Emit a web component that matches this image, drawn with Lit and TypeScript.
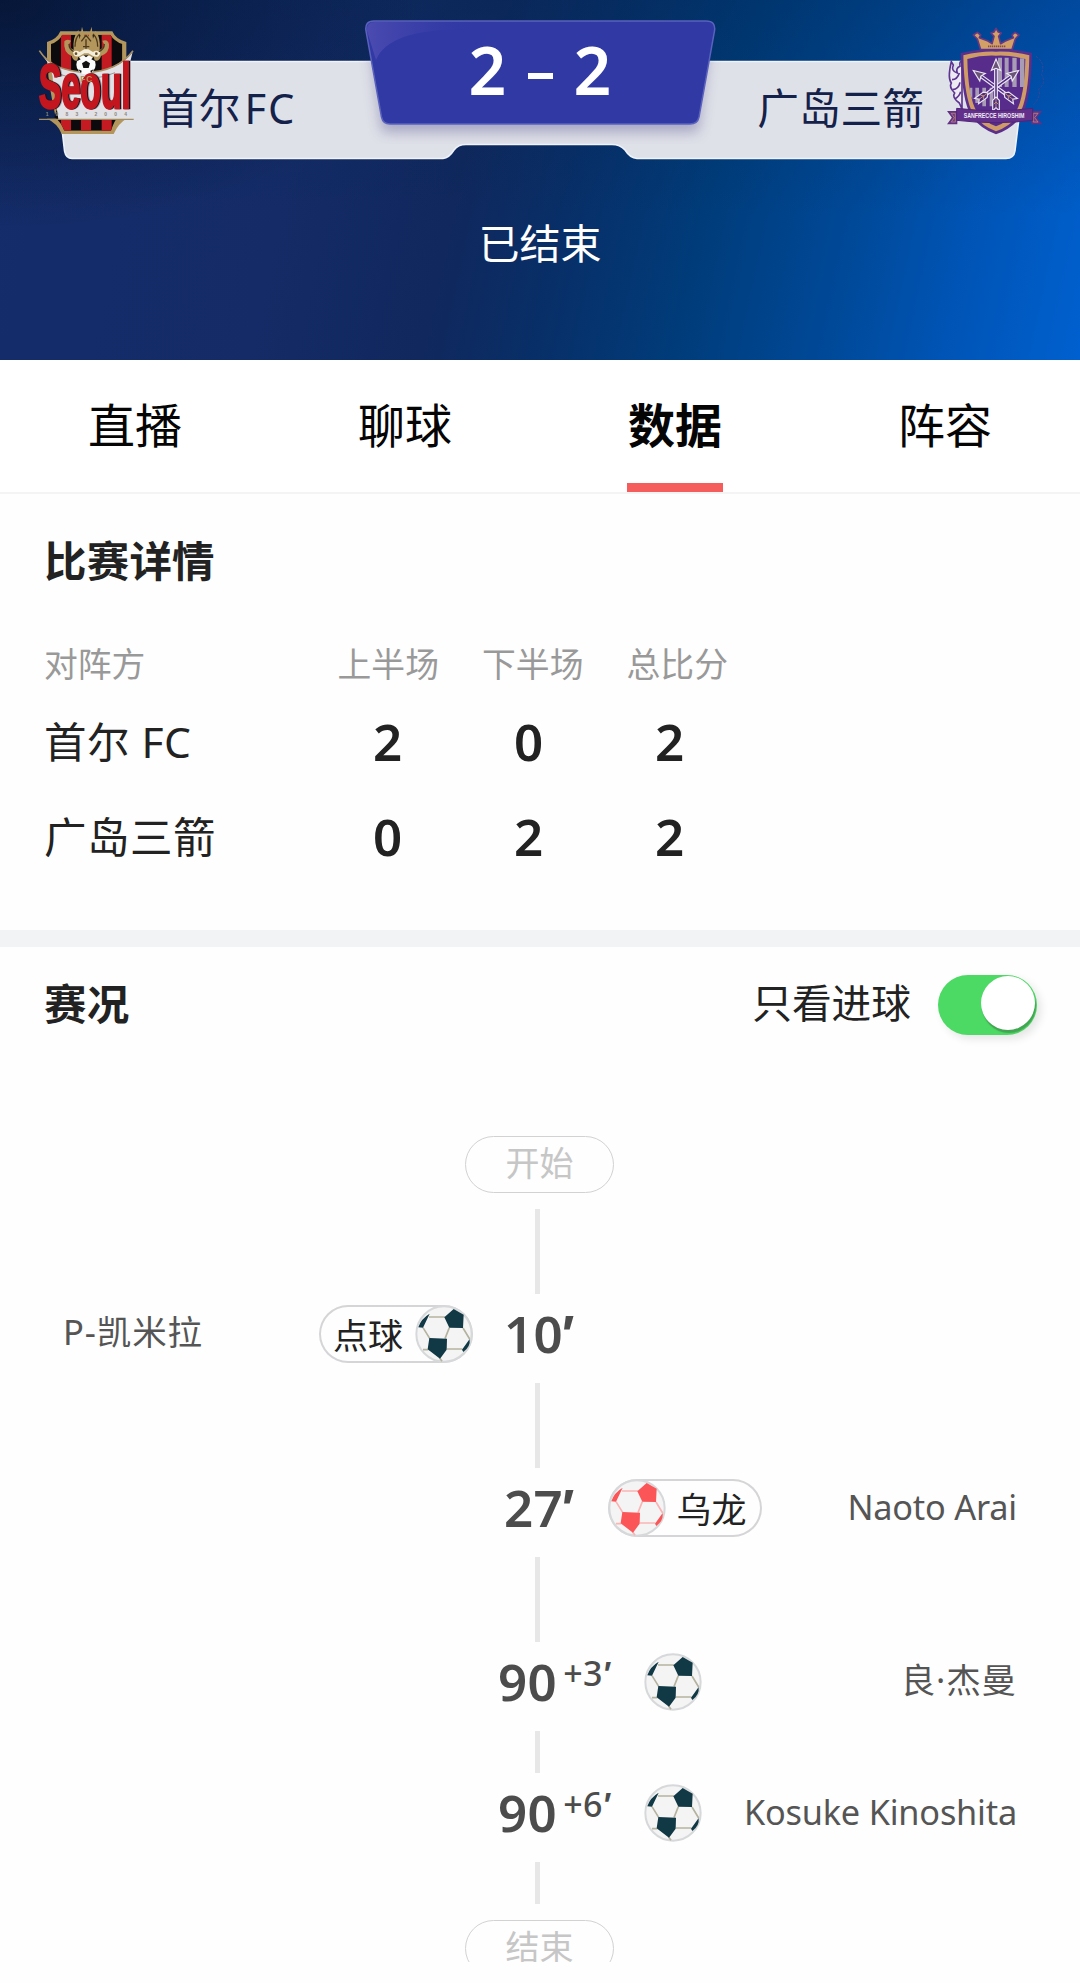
import { html, css, svg, LitElement } from "lit";
import { customElement, property, state } from "lit/decorators.js";
import { classMap } from "lit/directives/class-map.js";
import { map } from "lit/directives/map.js";


interface MatchEvent {
    minute: string;
    extra?: string;
    side: 'home' | 'away';
    player: string;
    latin?: boolean;
    label?: string;
    ownGoal?: boolean;
}

interface ScoreRow {
    team: string;
    scores: number[];
}

@customElement("soccer-ball")
export class SoccerBall extends LitElement {
    static styles = css`
    :host {
        display: block;
        width: 58px;
        height: 58px;
        flex: none;
    }
    svg {
        display: block;
    }
    .shell {
        fill: #f4f4f5;
        stroke: #d6d8da;
        stroke-width: 6;
    }
    .patch {
        fill: #103845;
    }
    .seam {
        fill: none;
        stroke: #b5b39f;
        stroke-width: 5;
    }
    .own .patch {
        fill: #fb5557;
    }
    .own .seam {
        stroke: #fab4b4;
    }
    `;
    @property({ type: Boolean }) own = false;

    render() {
        return html`
        <svg class=${classMap({ own: this.own })} width="58" height="58" viewBox="612 73 174 174">
            <circle class="shell" cx="699" cy="160" r="83"/>
            <path class="seam" d="M654 109H702M636 141L656 173M715 141L702 174M756 142L776 175M708 205H754M686 232L693 242M636 207H652"/>
            <path class="patch" d="M728 85L758 102L756 142L715 141L700 110ZM655 172L708 174L707 207L687 234L650 206ZM656 99L636 141L622 140Q630 114 656 99ZM776 175Q779 198 757 214L753 207Z"/>
        </svg>
        `;
    }
}

@customElement("seoul-crest")
export class SeoulCrest extends LitElement {
    static styles = css`
    :host, svg {
        display: block;
    }
    .name {
        font: bold 187px "Liberation Sans", sans-serif;
        fill: #c3161f;
        stroke: #c3161f;
        stroke-width: 7;
        filter: drop-shadow(7px 0 0 #16121c);
    }
    .fc {
        font: bold 25px "Liberation Sans", sans-serif;
        fill: #b3965b;
    }
    .years {
        font: bold 15px "Liberation Sans", sans-serif;
        fill: #8d887f;
    }
    `;

    render() {
        return html`
        <svg width="98" height="112" viewBox="108 72 294 336">
            <defs>
                <clipPath id="shield"><path d="M184 104H328Q340 124 364 132V175Q350 250 340 330L350 352Q340 362 330 392H190Q180 366 160 352L170 320Q152 230 150 175V132Q174 124 184 104Z"/></clipPath>
            </defs>
            <path fill="#b3965b" d="M178 94H334Q344 118 376 126V190Q370 300 352 356H376Q352 370 338 402H182Q170 370 138 356H165Q145 270 138 190V126Q168 118 178 94Z"/>
            <g clip-path="url(#shield)">
                <path fill="#0c0a0c" d="M140 90H380V410H140Z"/>
                <path fill="#c41a21" d="M180 90H210V410H180ZM240 90H270V410H240ZM302 90H332V410H302Z"/>
            </g>
            <path fill="#e1e1e6" d="M116 156Q160 215 255 217Q350 215 395 156L384 200V358H172L150 200Z"/>
            <path fill="none" stroke="#a58e62" stroke-width="5" d="M115 152Q155 214 255 217Q350 214 396 152"/>
            <path fill="#b3965b" d="M190 124Q196 116 210 122Q196 140 218 150Q214 112 232 90L236 118L243 80L251 110L255 92L262 110L272 80L276 116L284 92Q300 114 296 150Q316 140 304 122Q322 116 324 134Q326 158 300 168Q294 188 278 180H234Q218 188 212 168Q186 158 190 124Z"/>
            <path fill="none" stroke="#4d3a1e" stroke-width="4" d="M222 140Q222 114 236 102M290 140Q290 114 276 102M241 124L255 106L270 124M246 140H265M204 132Q204 148 220 156M310 132Q310 148 292 156M255 118V146"/>
            <path fill="#f3eddc" d="M216 156Q224 148 236 156L250 148H262L276 156Q288 148 298 158Q294 176 276 168L262 160H250L236 168Q218 174 216 156Z"/>
            <circle cx="225" cy="161" r="4" fill="#6a4d20"/>
            <circle cx="286" cy="161" r="4" fill="#6a4d20"/>
            <circle cx="255" cy="194" r="29" fill="#fbfbfb"/>
            <path fill="#111" d="M255 182L267 190L263 204H247L243 190ZM228 184L239 178L232 170ZM282 184L271 178L278 170ZM232 208L242 212L240 220ZM278 208L268 212L270 220ZM248 166H263L255 172Z"/>
            <path fill="none" stroke="#77716c" stroke-width="2" d="M172 221Q200 234 232 234M278 234Q312 232 342 218"/>
            <g transform="translate(113 324) scale(.55 1)">
                <text class="name" x="0" y="0" textLength="503">Seoul</text>
            </g>
            <text class="fc" x="238" y="247" textLength="36">FC</text>
            <text class="years" x="134" y="348" textLength="244">1983*2004</text>
            <path fill="none" stroke="#a58e62" stroke-width="4" d="M114 358H398"/>
        </svg>
        `;
    }
}

@customElement("hiroshima-crest")
export class HiroshimaCrest extends LitElement {
    static styles = css`
    :host, svg {
        display: block;
    }
    .motto {
        font: bold 20px "Liberation Sans", sans-serif;
        fill: #f1eaf5;
    }
    `;

    arrow(angle: number) {
        return svg`
        <g transform="rotate(${angle} 824 262)" stroke="#ece6f2" stroke-width="3.5" fill="#4f2a85">
            <path d="M820 206H828V302H820Z"/>
            <path d="M824 178L838 212L824 206L810 212Z" fill="#6a5478"/>
            <path d="M814 302L824 292L834 302V334L824 324L814 334Z"/>
            <path d="M824 296V326M817 314L824 307L831 314" fill="none" stroke="#c69a6a" stroke-width="2.5"/>
        </g>
        `;
    }

    render() {
        return html`
        <svg width="100" height="112" viewBox="674 76 300 336">
            <path fill="#eeeaf2" stroke="#5d3591" stroke-width="5" d="M690 186Q678 236 690 250Q682 262 700 280Q690 292 714 310L722 328V186Q714 182 716 200Q702 206 708 220Q688 214 696 196Z"/>
            <path fill="none" stroke="#5d3591" stroke-width="5" d="M692 240Q708 240 714 220M694 270Q712 268 716 248M700 298Q714 290 718 276"/>
            <path fill="none" stroke="#34489a" stroke-width="3" stroke-dasharray="8 4" d="M944 170Q974 190 960 224Q976 250 952 268Q960 290 936 316"/>
            <path fill="#d2a066" stroke="#693883" stroke-width="5" stroke-linejoin="round" d="M778 150L768 118L756 106L768 98L778 106L774 114L800 124L812 132L818 110L809 100L818 97L824 86L831 97L840 100L832 110L838 132L852 124L876 114L872 106L881 98L893 106L882 118L872 150Z"/>
            <path fill="none" stroke="#7e4a5c" stroke-width="5" stroke-dasharray="4 2" d="M800 140H852"/>
            <path fill="#5b2f8b" d="M718 160Q780 146 824 148Q870 146 932 160Q930 300 900 350Q870 388 824 404Q778 388 750 350Q720 300 718 160Z"/>
            <path fill="#cf9c68" d="M726 167Q780 154 824 156Q870 154 924 167Q922 296 894 344Q866 380 824 395Q782 380 756 344Q728 296 726 167Z"/>
            <path fill="#572c8b" d="M738 178Q780 166 824 168Q870 166 912 178Q910 290 884 336Q860 366 824 380Q788 366 766 336Q740 290 738 178Z"/>
            <path fill="#a79bb5" d="M830 174H842V262H830ZM850 174H862V262H850ZM873 174H886V262H873ZM896 176H909V262H896ZM745 264H753V300L745 280ZM762 264H773V310H762ZM783 264H794V320H783ZM805 264H816V320H805Z"/>
            ${this.arrow(-54)}
            ${this.arrow(54)}
            ${this.arrow(0)}
            <path fill="#6d3a8d" stroke="#633083" stroke-width="4" d="M681 336H706V372H681L694 354ZM959 336H932V372H959L944 354Z"/>
            <path fill="none" stroke="#c5956c" stroke-width="2" d="M690 341H702V367H690L699 354ZM950 341H936V367H950L940 354Z"/>
            <path fill="#62308b" stroke="#512477" stroke-width="3" d="M706 326Q824 340 934 326V362Q824 376 706 362Z"/>
            <text class="motto" x="727" y="354" textLength="182" lengthAdjust="spacingAndGlyphs">SANFRECCE HIROSHIM</text>
        </svg>
        `;
    }
}

@customElement("app-root")
export class AppRoot extends LitElement {
    static styles = css`
    :host {
        display: block;
        width: 1080px;
        height: 1983px;
        overflow: hidden;
        background: #fefefe;
        color: #222;
        font-family: "Noto Sans", "Noto Sans CJK SC", sans-serif;
    }
    .header {
        position: relative;
        height: 360px;
        background:
            radial-gradient(ellipse 420px 230px at 0 0, rgba(2, 12, 34, .65), rgba(2, 16, 46, 0)),
            linear-gradient(to bottom, rgba(0, 36, 78, .3), rgba(0, 36, 78, 0) 60%),
            linear-gradient(102deg, #142d6b 0%, #142b67 28%, #10285d 43%, #082f68 53%, #003c7a 65%, #004a9b 79%, #0054b5 88%, #0060cf 100%);
    }
    .board {
        position: absolute;
        left: 0;
        top: 0;
    }
    .teams {
        position: relative;
        display: grid;
        grid-template-columns: 120px 209px 348px 210px 156px;
        padding: 21px 0 0 37px;
        height: 140px;
        box-sizing: border-box;
    }
    .crest {
        padding-top: 3px;
    }
    .crest.away {
        padding: 4px 0 0 22px;
    }
    .team {
        padding-top: 57px;
        line-height: 60px;
        font-size: 41.7px;
        color: #14214a;
        white-space: nowrap;
    }
    .team.away {
        text-align: right;
    }
    .latin {
        margin-left: 4px;
        letter-spacing: 2px;
    }
    .score {
        display: flex;
        justify-content: center;
        gap: 21px;
        line-height: 96px;
        font-size: 66px;
        font-weight: 600;
        color: #fff;
    }
    .score .home-score, .score .away-score {
        width: 38px;
    }
    .dash {
        width: 25px;
        height: 6px;
        margin-top: 52px;
        background: #fff;
    }
    .status {
        position: relative;
        padding-top: 73px;
        line-height: 60px;
        font-size: 41px;
        text-align: center;
        color: #fff;
    }
    .tabs {
        display: grid;
        grid-template-columns: repeat(4, 1fr);
        height: 132px;
        border-bottom: 2px solid #f4f4f5;
        background: #fff;
    }
    .tab {
        display: flex;
        flex-direction: column;
        align-items: center;
        justify-content: space-between;
        padding-top: 30px;
        font-size: 47px;
        line-height: 70px;
        color: #050505;
    }
    .tab.active {
        font-weight: 700;
    }
    .tab.active::after {
        content: "";
        width: 96px;
        height: 9px;
        background: #f55c5c;
    }
    .details {
        padding: 37px 44px 45px;
    }
    .title {
        font-size: 42.5px;
        line-height: 60px;
        font-weight: 700;
        letter-spacing: .2px;
    }
    .row {
        display: grid;
        grid-template-columns: 273px 141px 141px 141px;
        height: 95px;
        line-height: 93px;
        font-size: 42.5px;
    }
    .row.head {
        grid-template-columns: 272px 144.5px 144.5px 144.5px;
        margin-top: 48px;
        height: 56px;
        line-height: 50px;
        font-size: 33.8px;
        color: #999;
    }
    .name {
        letter-spacing: .5px;
    }
    .cell {
        text-align: center;
    }
    .goals {
        font-size: 51px;
        font-weight: 600;
    }
    .divider {
        height: 17px;
        background: #f2f3f5;
    }
    .feed-head {
        display: flex;
        align-items: center;
        height: 116px;
        padding: 0 43px 0 44px;
    }
    .feed-head .title {
        padding-bottom: 3px;
    }
    .only-goals {
        margin-left: auto;
        margin-right: 27px;
        padding-bottom: 4px;
        font-size: 39.7px;
        line-height: 60px;
    }
    .switch {
        width: 99px;
        height: 60px;
        padding: 1px 2px;
        box-sizing: border-box;
        border-radius: 30px;
        background: #c9c9cb;
        display: flex;
        cursor: pointer;
    }
    .switch.on {
        justify-content: flex-end;
        background: #4cd964;
        box-shadow: 4px 4px 8px rgba(0, 0, 0, .1);
    }
    .knob {
        width: 54px;
        height: 54px;
        border-radius: 50%;
        background: #fff;
        box-shadow: 1px 3px 1px rgba(60, 130, 70, .6);
    }
    .timeline {
        padding-top: 73px;
    }
    .mark {
        width: 149px;
        height: 57px;
        box-sizing: border-box;
        margin: 0 0 16px 465px;
        border: 1.5px solid #d2d2d2;
        border-radius: 29px;
        text-align: center;
        font-size: 34px;
        line-height: 52px;
        color: #c6c6c6;
    }
    .line {
        width: 5px;
        height: 85px;
        margin-left: 535px;
        background: #e7e7e7;
    }
    .line.short {
        height: 42px;
    }
    .event {
        display: grid;
        grid-template-columns: 473px 135px 1fr;
        height: 89px;
        padding-top: 11px;
        box-sizing: border-box;
    }
    .side {
        display: flex;
        align-items: center;
        justify-content: space-between;
        height: 57px;
    }
    .side.home {
        padding-left: 63px;
    }
    .side.away {
        padding-right: 63px;
    }
    .side.plain {
        padding-left: 36px;
    }
    .player {
        padding-bottom: 3px;
        font-size: 34.5px;
        line-height: 50px;
        letter-spacing: .9px;
        color: #555;
        white-space: nowrap;
    }
    .player.roman {
        padding-bottom: 1px;
        font-size: 34.3px;
        letter-spacing: -.2px;
    }
    .badge {
        display: flex;
        align-items: center;
        width: 154px;
        height: 58px;
        box-sizing: border-box;
        border-radius: 29px;
        box-shadow: inset 0 0 0 2px #d5d5d7;
        font-size: 35px;
        line-height: 50px;
        color: #222;
    }
    .badge .label {
        flex: 1;
        text-align: center;
        padding: 4px 6px 0 8px;
    }
    .badge soccer-ball + .label {
        padding: 4px 8px 0 3px;
    }
    .time {
        display: flex;
        padding-left: 31px;
        line-height: 56px;
        font-size: 51px;
        font-weight: 600;
        letter-spacing: .4px;
        color: #4c4c4c;
        white-space: nowrap;
    }
    .time.added {
        padding-left: 25px;
    }
    .prime {
        margin-left: -4px;
        font-style: italic;
        font-weight: 800;
    }
    .extra {
        margin-left: 6px;
        font-size: 34px;
        line-height: 40px;
        font-weight: 500;
    }
    .extra .prime {
        margin-left: -1px;
        font-weight: 700;
    }
    .cutoff {
        height: 42px;
        margin-top: 16px;
        overflow: hidden;
    }
    `;
    @state() onlyGoals = true;

    tabs = ['直播', '聊球', '数据', '阵容'];
    activeTab = '数据';

    rows: ScoreRow[] = [
        { team: '首尔 FC', scores: [2, 0, 2] },
        { team: '广岛三箭', scores: [0, 2, 2] },
    ];

    events: MatchEvent[] = [
        { minute: '10', side: 'home', player: 'P-凯米拉', label: '点球' },
        { minute: '27', side: 'away', player: 'Naoto Arai', latin: true, label: '乌龙', ownGoal: true },
        { minute: '90', extra: '+3', side: 'away', player: '良·杰曼' },
        { minute: '90', extra: '+6', side: 'away', player: 'Kosuke Kinoshita', latin: true },
    ];

    renderBoard() {
        return html`
        <svg class="board" width="1080" height="180" viewBox="0 0 1080 180">
            <defs>
                <filter id="drop" x="-10%" y="-10%" width="120%" height="140%">
                    <feGaussianBlur stdDeviation="7"/>
                </filter>
                <linearGradient id="gloss" x1="0" x2="1">
                    <stop offset="0" stop-color="#5a55b8" stop-opacity=".65"/>
                    <stop offset="1" stop-color="#3a3aa5" stop-opacity="0"/>
                </linearGradient>
                <clipPath id="plate"><path d="M54 61H1026V144H54Z"/></clipPath>
            </defs>
            <path fill="#dfe1e8" stroke="#eef3fc" stroke-width="1.5" d="M54 61.5H1026L1015 151Q1014 158.5 1006 158.5H637Q630 158 625 150Q620 144.5 612 144.5H466Q458 144.5 454 150Q449 158 443 158.5H72Q66 158.5 64.5 151Z"/>
            <g clip-path="url(#plate)">
                <path fill="#5f5a95" opacity=".45" filter="url(#drop)" d="M370 40H710L698 132H382Z"/>
            </g>
            <path fill="#3039a4" stroke="#5a62bd" stroke-width="1.5" d="M374 21H706Q716 21 714.5 31L699 117Q697.5 124 690 124H390Q383 124 381.5 117L366 31Q364.5 21 374 21Z"/>
            <path fill="url(#gloss)" d="M375 22H480V30Q390 26 376 60L367 31Q366 22 375 22Z"/>
        </svg>
        `;
    }

    renderBadge(event: MatchEvent) {
        const ball = html`<soccer-ball ?own=${event.ownGoal}></soccer-ball>`;
        if (!event.label) {
            return ball;
        }
        const label = html`<span class="label">${event.label}</span>`;
        return html`
        <div class="badge">
            ${event.side === 'home' ? html`${label}${ball}` : html`${ball}${label}`}
        </div>
        `;
    }

    renderEvent(event: MatchEvent, index: number) {
        const player = html`<span class="player ${event.latin ? 'roman' : ''}">${event.player}</span>`;
        const prime = html`<span class="prime">'</span>`;
        return html`
        <div class="line ${index > 2 ? 'short' : ''}"></div>
        <div class="event">
            <div class="side home">
                ${event.side === 'home' ? html`${player}${this.renderBadge(event)}` : ''}
            </div>
            <div class="time ${event.extra ? 'added' : ''}">
                ${event.minute}${event.extra ? html`<span class="extra">${event.extra}${prime}</span>` : prime}
            </div>
            <div class="side away ${event.label ? '' : 'plain'}">
                ${event.side === 'away' ? html`${this.renderBadge(event)}${player}` : ''}
            </div>
        </div>
        `;
    }

    render() {
        return html`
        <div class="header">
            ${this.renderBoard()}
            <div class="teams">
                <seoul-crest class="crest"></seoul-crest>
                <div class="team">首尔<span class="latin">FC</span></div>
                <div class="score">
                    <span class="home-score">2</span>
                    <span class="dash"></span>
                    <span class="away-score">2</span>
                </div>
                <div class="team away">广岛三箭</div>
                <hiroshima-crest class="crest away"></hiroshima-crest>
            </div>
            <div class="status">已结束</div>
        </div>
        <div class="tabs">
            ${map(this.tabs, (t) => html`<div class="tab ${t === this.activeTab ? 'active' : ''}">${t}</div>`)}
        </div>
        <div class="details">
            <div class="title">比赛详情</div>
            <div class="row head">
                <span>对阵方</span>
                <span class="cell">上半场</span>
                <span class="cell">下半场</span>
                <span class="cell">总比分</span>
            </div>
            ${map(this.rows, (r) => html`
                <div class="row">
                    <span class="name">${r.team}</span>
                    ${map(r.scores, (s) => html`<span class="cell goals">${s}</span>`)}
                </div>
            `)}
        </div>
        <div class="divider"></div>
        <div class="feed-head">
            <div class="title">赛况</div>
            <div class="only-goals">只看进球</div>
            <div class="switch ${this.onlyGoals ? 'on' : ''}" @click=${() => this.onlyGoals = !this.onlyGoals}>
                <div class="knob"></div>
            </div>
        </div>
        <div class="timeline">
            <div class="mark">开始</div>
            ${map(this.events, (e, i) => this.renderEvent(e, i))}
            <div class="line short"></div>
            <div class="cutoff">
                <div class="mark">结束</div>
            </div>
        </div>
        `;
    }
}
